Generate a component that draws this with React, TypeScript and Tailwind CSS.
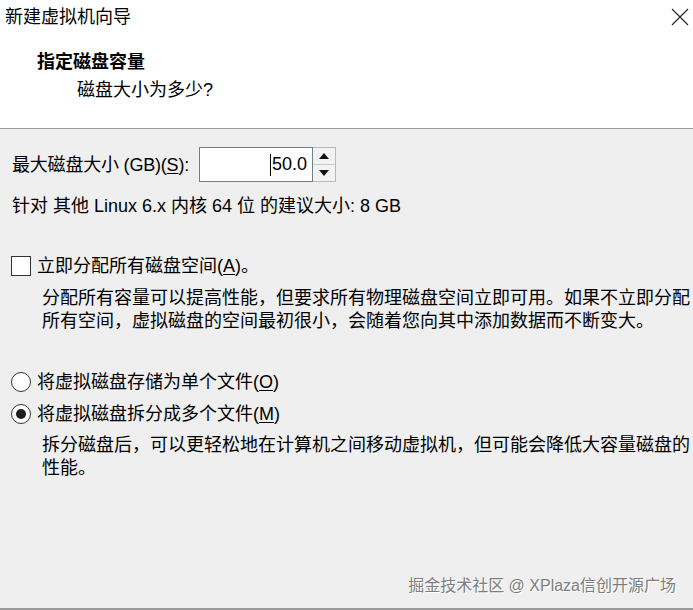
import { useState } from 'react'

const font = "font-['Liberation_Sans','Noto_Sans_CJK_SC',sans-serif]"

function Mnemonic({ ch }: { ch: string }) {
  return <span className="underline underline-offset-2">{ch}</span>
}

function Radio({ checked, onClick }: { checked: boolean; onClick: () => void }) {
  return (
    <button
      onClick={onClick}
      className="w-[20px] h-[20px] rounded-full border border-[#333] bg-white flex items-center justify-center shrink-0"
    >
      {checked && <span className="w-[10px] h-[10px] rounded-full bg-[#1e1e1e]" />}
    </button>
  )
}

export default function App() {
  const [size, setSize] = useState(50)
  const [allocate, setAllocate] = useState(false)
  const [split, setSplit] = useState(true)

  return (
    <div className={`w-[693px] h-[610px] flex flex-col bg-[#efefef] text-black text-[18px] ${font}`}>
      {/* Header */}
      <div className="h-[129px] bg-white border-b border-[#999] shrink-0 relative">
        <div className="pl-[5px] pt-[5px] leading-[24px]">新建虚拟机向导</div>
        <button className="absolute top-[7px] right-[3px] w-[20px] h-[20px] flex items-center justify-center">
          <svg width="18" height="18" viewBox="0 0 18 18" fill="none" stroke="#222" strokeWidth="1.1">
            <path d="M1 1 L17 17 M17 1 L1 17" />
          </svg>
        </button>
        <div className="pl-[37px] mt-[21px] leading-[24px] font-bold">指定磁盘容量</div>
        <div className="pl-[77px] mt-[4px] leading-[24px]">磁盘大小为多少?</div>
      </div>

      {/* Body */}
      <div className="flex-1 flex flex-col border-b-2 border-[#999]">
        <div className="flex items-center h-[35px] mt-[18px]">
          <div className="w-[199px] pl-[12px] leading-[24px] whitespace-nowrap tracking-[-0.2px]">
            最大磁盘大小 (GB)(<Mnemonic ch="S" />):
          </div>
          <div className="w-[114px] h-[35px] border border-[#6f7f88] bg-white flex items-center justify-end pr-[5px]">
            <span className="w-px h-[22px] bg-black mr-[1px]" />
            <span className="text-[18px]">{size.toFixed(1)}</span>
          </div>
          <div className="w-[23px] h-[35px] border border-l-0 border-[#b9b9b9] flex flex-col">
            <button
              onClick={() => setSize(size + 1)}
              className="flex-1 flex items-center justify-center border-b border-[#c9c9c9] bg-[#f3f3f3]"
            >
              <svg width="10" height="6" viewBox="0 0 10 6"><path d="M0 6 L5 0 L10 6 Z" fill="#111" /></svg>
            </button>
            <button
              onClick={() => setSize(Math.max(1, size - 1))}
              className="flex-1 flex items-center justify-center bg-[#f3f3f3]"
            >
              <svg width="10" height="6" viewBox="0 0 10 6"><path d="M0 0 L10 0 L5 6 Z" fill="#111" /></svg>
            </button>
          </div>
        </div>

        <div className="pl-[12px] mt-[12px] leading-[24px] whitespace-nowrap">
          针对 其他 Linux 6.x 内核 64 位 的建议大小: 8 GB
        </div>

        <div className="flex items-center gap-[6px] pl-[11px] mt-[36px] h-[24px]">
          <button
            onClick={() => setAllocate(!allocate)}
            className="w-[20px] h-[20px] border border-[#333] bg-white flex items-center justify-center shrink-0"
          >
            {allocate && (
              <svg width="14" height="14" viewBox="0 0 14 14" fill="none" stroke="#111" strokeWidth="2">
                <path d="M2 7 L6 11 L12 3" />
              </svg>
            )}
          </button>
          <span className="leading-[24px] whitespace-nowrap">立即分配所有磁盘空间(<Mnemonic ch="A" />)。</span>
        </div>
        <div className="pl-[42px] mt-[9px] leading-[23px] whitespace-nowrap">
          <div>分配所有容量可以提高性能，但要求所有物理磁盘空间立即可用。如果不立即分配</div>
          <div>所有空间，虚拟磁盘的空间最初很小，会随着您向其中添加数据而不断变大。</div>
        </div>

        <div className="flex items-center gap-[6px] pl-[11px] mt-[37px] h-[24px]">
          <Radio checked={!split} onClick={() => setSplit(false)} />
          <span className="leading-[24px] whitespace-nowrap">将虚拟磁盘存储为单个文件(<Mnemonic ch="O" />)</span>
        </div>
        <div className="flex items-center gap-[6px] pl-[11px] mt-[8px] h-[24px]">
          <Radio checked={split} onClick={() => setSplit(true)} />
          <span className="leading-[24px] whitespace-nowrap">将虚拟磁盘拆分成多个文件(<Mnemonic ch="M" />)</span>
        </div>
        <div className="pl-[42px] mt-[8px] leading-[23px] whitespace-nowrap">
          <div>拆分磁盘后，可以更轻松地在计算机之间移动虚拟机，但可能会降低大容量磁盘的</div>
          <div>性能。</div>
        </div>

        {/* watermark */}
        <div className="mt-auto flex justify-end pr-[17px] pb-[10px]">
          <span className="text-[16px] leading-[24px] text-[#7e7e7e] [text-shadow:1px_1px_0_#ffffff]">
            掘金技术社区 @ XPlaza信创开源广场
          </span>
        </div>
      </div>
    </div>
  )
}
